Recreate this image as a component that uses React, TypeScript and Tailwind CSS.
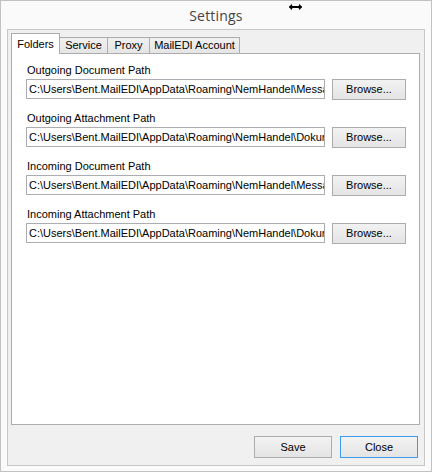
import React from "react";

const rows = [
  { label: "Outgoing Document Path", value: "C:\\Users\\Bent.MailEDI\\AppData\\Roaming\\NemHandel\\Messages" },
  { label: "Outgoing Attachment Path", value: "C:\\Users\\Bent.MailEDI\\AppData\\Roaming\\NemHandel\\Dokumenter" },
  { label: "Incoming Document Path", value: "C:\\Users\\Bent.MailEDI\\AppData\\Roaming\\NemHandel\\Messages" },
  { label: "Incoming Attachment Path", value: "C:\\Users\\Bent.MailEDI\\AppData\\Roaming\\NemHandel\\Dokumenter" },
];

function Tab({ label, width, selected, first }: { label: string; width: string; selected?: boolean; first?: boolean }) {
  if (selected) {
    return (
      <div
        className={`relative z-10 h-[21px] -mb-px ${width} ${first ? "" : "-ml-px"} flex items-center justify-center border border-b-0 border-[#acacac] bg-white text-[11px] text-black`}
      >
        {label}
      </div>
    );
  }
  return (
    <div
      className={`h-[16px] ${width} ${first ? "" : "-ml-px"} flex items-center justify-center border border-b-0 border-[#acacac] bg-linear-to-b from-[#f0f0f0] to-[#e5e5e5] text-[11px] text-black`}
    >
      {label}
    </div>
  );
}

export default function App() {
  return (
    <div className="w-[432px] h-[473px] bg-white font-['Liberation_Sans',Arial,sans-serif]">
      <div className="relative w-[432px] h-[472px] border border-[#c2c2c2] bg-[#fafafa] flex flex-col">
        <div className="h-[28px] flex items-center justify-center">
          <span className="font-['Open_Sans',sans-serif] text-[14px] text-[#444] tracking-[0.2px]">Settings</span>
        </div>
        <svg className="absolute left-[286px] top-[1px]" width="17" height="10" viewBox="0 0 17 10">
          <path d="M1 5 L5.5 1 V3.5 H11.5 V1 L16 5 L11.5 9 V6.5 H5.5 V9 Z" fill="#000" stroke="#fff" strokeWidth="1" />
        </svg>
        <div className="ml-[6px] w-[418px] h-[437px] border border-[#c8c8c8] bg-[#f0f0f0] flex flex-col pt-[4px] px-[3px]">
          <div className="h-[19px] flex items-end">
            <Tab label="Folders" width="w-[49px]" selected first />
            <Tab label="Service" width="w-[49px]" />
            <Tab label="Proxy" width="w-[43px]" />
            <Tab label="MailEDI Account" width="w-[91px]" />
          </div>
          <div className="w-[409px] h-[372px] border border-[#acacac] bg-white pt-[10px] pl-[14px] flex flex-col gap-[12px]">
            {rows.map((r) => (
              <div key={r.label} className="flex flex-col">
                <div className="ml-px h-[13px] leading-[13px] text-[11px] text-black">{r.label}</div>
                <div className="mt-[2px] flex gap-[7px]">
                  <div className="w-[299px] h-[20px] border border-[#abadb3] bg-white px-[2px] overflow-hidden whitespace-nowrap text-[11px] leading-[18px] text-black">
                    {r.value}
                  </div>
                  <div className="w-[74px] h-[21px] border border-[#acacac] bg-linear-to-b from-[#f2f2f2] to-[#e4e4e4] flex items-center justify-center text-[11px] text-black">
                    Browse...
                  </div>
                </div>
              </div>
            ))}
          </div>
          <div className="mt-[11px] mr-[3px] flex justify-end gap-[8px]">
            <div className="w-[78px] h-[22px] border border-[#acacac] bg-linear-to-b from-[#f2f2f2] to-[#e4e4e4] flex items-center justify-center text-[11px] text-black">
              Save
            </div>
            <div className="w-[78px] h-[22px] border border-[#3c9bf0] bg-linear-to-b from-[#f2f2f2] to-[#e4e4e4] flex items-center justify-center text-[11px] text-black">
              Close
            </div>
          </div>
        </div>
      </div>
    </div>
  );
}
